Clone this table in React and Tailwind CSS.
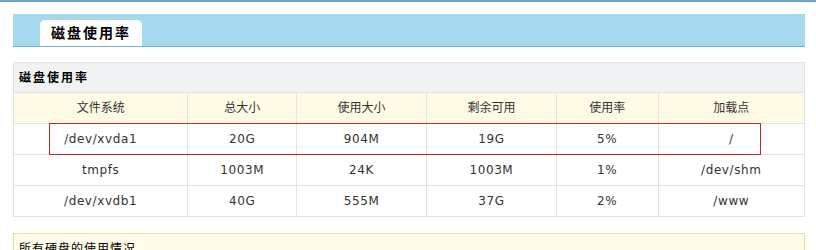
const disks = [
  { fs: '/dev/xvda1', total: '20G', used: '904M', free: '19G', rate: '5%', mount: '/' },
  { fs: 'tmpfs', total: '1003M', used: '24K', free: '1003M', rate: '1%', mount: '/dev/shm' },
  { fs: '/dev/xvdb1', total: '40G', used: '555M', free: '37G', rate: '2%', mount: '/www' },
]

const heads = ['文件系统', '总大小', '使用大小', '剩余可用', '使用率', '加载点']
const widths = ['w-[174px]', 'w-[109px]', 'w-[130px]', 'w-[130px]', 'w-[102px]', 'w-[146px]']

const cjk = "font-['DejaVu_Sans','Noto_Sans_CJK_SC',sans-serif]"

export default function App() {
  return (
    <div className={`w-[816px] h-[250px] overflow-hidden bg-white text-[#333] ${cjk}`}>
      <div className="h-[2px] bg-[#6aa7c9]" />

      <div className="ml-[13px] w-[792px]">
        {/* page title band */}
        <div className="mt-[12px] h-[33px] bg-[#a6d8ee] border-b border-[#7fb2cc] flex items-end">
          <div className="ml-[27px] w-[102px] h-[26px] bg-white rounded-t-[5px] flex items-center justify-center text-[14px] font-bold tracking-[2px] text-black">
            磁盘使用率
          </div>
        </div>

        {/* disk usage panel */}
        <div className="mt-[15px] border border-[#dfe1e5] border-b-0">
          <div className="h-[30px] bg-[#f1f2f4] border-b border-[#dfe1e5] flex items-center pl-[5px] text-[12px] font-bold text-black tracking-[2px]">
            磁盘使用率
          </div>
          <div className="relative">
            <table className="w-full border-collapse text-[12px] text-center">
              <thead>
                <tr className="h-[30px] bg-[#fffbe5]">
                  {heads.map((h, i) => (
                    <th key={h} className={`${widths[i]} font-normal border-r border-b border-[#e3e3e3] last:border-r-0`}>{h}</th>
                  ))}
                </tr>
              </thead>
              <tbody>
                {disks.map(d => (
                  <tr key={d.fs} className="h-[31px] tracking-[0.6px]">
                    {[d.fs, d.total, d.used, d.free, d.rate, d.mount].map((v, i) => (
                      <td key={i} className="border-r border-b border-[#e3e3e3] last:border-r-0">{v}</td>
                    ))}
                  </tr>
                ))}
              </tbody>
            </table>
            {/* highlight on the system disk row */}
            <div className="absolute left-[35px] top-[30px] w-[712px] h-[32px] border border-[#c1272d] pointer-events-none" />
          </div>
        </div>

        {/* summary box */}
        <div className="mt-[16px] h-[40px] border border-[#f0dc8c] bg-[#fffde9] pl-[5px] pt-[6px] text-[12px] text-black tracking-[1px]">
          所有硬盘的使用情况
        </div>
      </div>
    </div>
  )
}
